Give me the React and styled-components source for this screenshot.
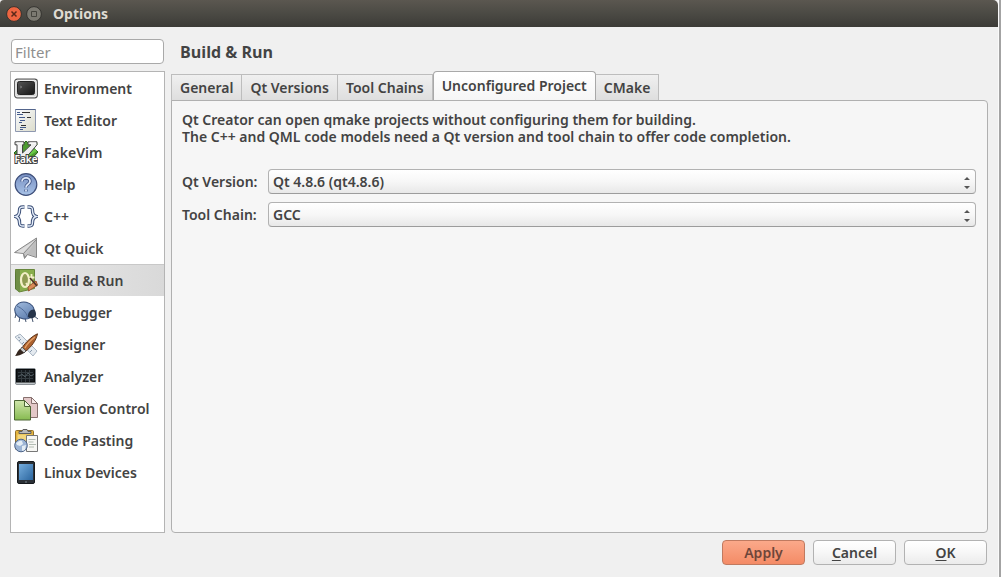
import React, { useState } from 'react';
import styled, { createGlobalStyle } from 'styled-components';

const Global = createGlobalStyle`
  * { box-sizing: border-box; }
  body {
    margin: 0;
    background: #a3a3a3;
    color: #434343;
    font-family: "Noto Sans", "Open Sans", sans-serif;
    font-size: 14px;
    font-weight: 600;
    line-height: 18px;
  }
  button, input, select { font: inherit; color: inherit; }
`;

const Window = styled.div`
  display: flex;
  flex-direction: column;
  min-height: 100vh;
  margin-right: 2px;
  background: #f0f0f0;
  border-right: 1px solid #fafafa;
`;

const TitleBar = styled.header`
  display: flex;
  align-items: center;
  height: 27px;
  padding-left: 6px;
  gap: 4px;
  background: linear-gradient(#5b5750, #4b4a44 50%, #3c3b37);
  border-radius: 4px 5px 0 0;
`;

const WindowButton = styled.button`
  display: grid;
  width: 16px;
  height: 16px;
  padding: 0;
  border: 0;
  background: none;
`;

const Title = styled.h1`
  margin: 0 0 0 7px;
  color: #dfdbd2;
  font-size: 14px;
  line-height: 18px;
  font-weight: 700;
`;

const Body = styled.main`
  flex: 1;
  display: flex;
  gap: 6px;
  padding: 12px 10px 7px;
`;

const Sidebar = styled.nav`
  display: flex;
  flex-direction: column;
  gap: 7px;
  flex: 0 0 155px;
  min-width: 0;
`;

const Filter = styled.input`
  min-width: 0;
  height: 25px;
  margin: 0 1px;
  padding: 0 3px;
  border: 1px solid #a9a9a9;
  border-radius: 4px;
  background: #fff;
  font-size: 15px;
  font-weight: 400;
  &::placeholder { color: #8f8f8f; opacity: 1; }
`;

const CategoryList = styled.ul`
  flex: 1;
  margin: 0;
  padding: 0;
  list-style: none;
  border: 1px solid #b4b4b4;
  background: #fff;
`;

const Category = styled.button`
  display: flex;
  align-items: center;
  gap: 6px;
  width: 100%;
  height: 32px;
  padding: 0 0 0 3px;
  border: 0;
  border-top: 1px solid ${(p) => (p.$active ? '#c8c8c8' : 'transparent')};
  background: ${(p) => (p.$active ? 'linear-gradient(90deg, #e9e9e9, #d9d9d9)' : 'none')};
  text-align: left;
  white-space: nowrap;
`;

const Content = styled.section`
  flex: 1;
  display: flex;
  flex-direction: column;
  min-width: 0;
`;

const Heading = styled.h2`
  margin: 0 0 6px 9px;
  font-family: "Open Sans", sans-serif;
  font-size: 16px;
  line-height: 26px;
  font-weight: 700;
`;

const Tabs = styled.div`
  display: flex;
  align-items: flex-end;
  margin-bottom: -1px;
`;

const Tab = styled.button`
  height: ${(p) => (p.$active ? 30 : 27)}px;
  padding: 0 8px;
  border: 1px solid ${(p) => (p.$active ? '#a8a8a8' : '#bdbdbd')};
  border-bottom-color: ${(p) => (p.$active ? '#f6f6f6' : '#b0b0b0')};
  border-left-width: ${(p) => (p.$joined ? 0 : 1)}px;
  border-radius: ${(p) => (p.$active ? '4px 4px 0 0' : 0)};
  background: ${(p) => (p.$active ? 'linear-gradient(#fff, #f6f6f6)' : 'linear-gradient(#f0f0f0, #dedede)')};
  white-space: nowrap;
`;

const Pane = styled.div`
  flex: 1;
  padding: 10px 11px 10px 10px;
  border: 1px solid #b0b0b0;
  border-radius: 0 4px 4px 4px;
  background: #f6f6f6;
`;

const Note = styled.p`
  margin: 0 0 24px;
  line-height: 17px;
`;

const Fields = styled.div`
  display: grid;
  grid-template-columns: 78px 1fr;
  column-gap: 8px;
  row-gap: 8px;
  align-items: center;
  white-space: nowrap;
`;

const Picker = styled.div`
  position: relative;
  display: grid;
  height: 25px;
  & > svg { position: absolute; right: 5px; top: 7px; pointer-events: none; }
`;

const Select = styled.select`
  appearance: none;
  width: 100%;
  padding: 0 20px 0 4px;
  border: 1px solid #b2b2b2;
  border-bottom-color: #9c9c9c;
  border-radius: 4px;
  background: linear-gradient(#fff, #f7f7f7 50%, #e8e8e8);
`;

const Footer = styled.footer`
  display: flex;
  justify-content: flex-end;
  gap: 8px;
  padding: 0 11px 12px;
`;

const Action = styled.button`
  width: 83px;
  height: 25px;
  padding: 0;
  border: 1px solid ${(p) => (p.$primary ? '#c07a60' : '#b2b2b2')};
  border-radius: 4px;
  background: ${(p) => (p.$primary ? 'linear-gradient(#fba98a, #f48b66)' : 'linear-gradient(#fff, #f7f7f7 50%, #ebebeb)')};
  color: ${(p) => (p.$primary ? '#6e463a' : 'inherit')};
  u { text-underline-offset: 2px; }
`;

const Svg = ({ children }) => (
  <svg width="24" height="24" viewBox="0 0 24 24" aria-hidden="true">{children}</svg>
);

const EnvironmentIcon = () => (
  <Svg>
    <defs><linearGradient id="crt" x2="1" y2="1"><stop stopColor="#555" /><stop offset="1" stopColor="#161616" /></linearGradient></defs>
    <rect x="0.7" y="2.2" width="22.6" height="18.6" rx="2.5" fill="#d4d4d4" stroke="#555" strokeWidth="1.2" />
    <rect x="1.8" y="3.3" width="20.4" height="16.4" rx="1.6" fill="none" stroke="#f4f4f4" />
    <rect x="3.500" y="4.500" width="17" height="13" rx="2" fill="url(#crt)" stroke="#222" />
    <path d="M6 9l2 1-2 1" stroke="#777" fill="none" />
  </Svg>
);

const TextEditorIcon = () => (
  <Svg>
    <defs><linearGradient id="sheet" x2="1" y2="1"><stop stopColor="#f9fbff" /><stop offset="1" stopColor="#dcdccb" /></linearGradient></defs>
    <path d="M1.5.5h20v22h-20z" fill="url(#sheet)" stroke="#8e98b0" />
    <path d="M1.500.5h20" stroke="#53658c" />
    <path d="M3 3.500h3M3 5.500h6M5 8.500h6M6 11.500h5M5 13.500h3M6 18.500h6M6 20.500h3" stroke="#435b8c" />
    <path d="M8 3.500h8M13 8.500h4M7 16.500h5" stroke="#333" />
  </Svg>
);

const FakeVimIcon = () => (
  <Svg>
    <path d="M12 0l12 11-11 12L0 12z" fill="#4d9b30" stroke="#27601d" />
    <path d="M13 9l10-7M14 14l8-5" stroke="#67c946" strokeWidth="3" />
    <path d="M1 .8h9v3H8.500V12L17 3.800h-3v-3h9v3L10 19H3V3.800H1z" fill="#eee" stroke="#444" />
    <path d="M3 2h6M16 2h6M5 4v11" stroke="#fff" />
    <text x="12" y="22" textAnchor="middle" fontSize="10" fontWeight="600" fill="#fff" stroke="#444" strokeWidth="2" paintOrder="stroke">Fake</text>
  </Svg>
);

const HelpIcon = () => (
  <Svg>
    <defs><linearGradient id="orb" x2="0" y2="1"><stop stopColor="#7890c3" /><stop offset="1" stopColor="#a8c2e6" /></linearGradient></defs>
    <circle cx="12" cy="11.500" r="10.800" fill="url(#orb)" stroke="#3e4e79" strokeWidth="1.200" />
    <path d="M8 8.500c0-5 8.500-4.500 8 0-.3 3-4 2.500-4 6M12 16.500v2" fill="none" stroke="#425687" strokeWidth="3.400" />
    <path d="M8 8.500c0-5 8.500-4.500 8 0-.3 3-4 2.500-4 6M12 16.500v2" fill="none" stroke="#dce6f8" strokeWidth="1.800" />
  </Svg>
);

const CppIcon = () => (
  <Svg>
    {[['#3d5078', 3.4], ['#e4edfa', 1.4]].map(([color, width]) => (
      <g key={color} fill="none" stroke={color} strokeWidth={width}>
        <path d="M10.500 2H9C6 2 5.500 3 5.500 5.500S5.300 10.500 1.800 11.500c3.500 1 3.700 3.500 3.700 6S6 21 9 21h1.500" />
        <path d="M13.500 2H15c3 0 3.500 1 3.500 3.500s.2 5 3.700 6c-3.500 1-3.700 3.500-3.700 6S18 21 15 21h-1.500" />
      </g>
    ))}
  </Svg>
);

const QtQuickIcon = () => (
  <Svg>
    <path d="M22.500 1v19.500l-9-3-3 4-1-5-9-1z" fill="#c5c5c5" stroke="#888" />
    <path d="M21.500 3L9.500 16l-7-1z" fill="#dedede" />
    <path d="M22 3L14 17l8 2.500z" fill="#bdbdbd" />
    <path d="M22 3L9.500 16.500l1 4 3-3" fill="none" stroke="#8b8b8b" />
  </Svg>
);

const BuildIcon = () => (
  <Svg>
    <path d="M1 1l4 2v20l-4-3z" fill="#587634" />
    <path d="M1.500.5h19v19L5 23z" fill="#88ad4c" stroke="#67863b" />
    <path d="M2 1h4v20l-1 2-3-3z" fill="#6f8e46" />
    <ellipse cx="11" cy="11" rx="4" ry="7" fill="#8f9b52" stroke="#f3efc7" strokeWidth="2.200" />
    <path d="M12 14l3 4M17.500 5v9c0 2 1 2 2 2M15.500 8.500h5" fill="none" stroke="#f3efc7" strokeWidth="1.800" />
    <path d="M14 18l5-4 3-2 1.500 4-9 6z" fill="#d88b57" stroke="#9c5730" />
    <path d="M16 9l7 8" stroke="#4d3328" strokeWidth="1.600" />
  </Svg>
);

const DebuggerIcon = () => (
  <Svg>
    <defs><linearGradient id="bug" x2="1" y2="1"><stop stopColor="#a4bee0" /><stop offset="1" stopColor="#5676a8" /></linearGradient></defs>
    <path d="M6 16l-1 5M11 17l1 4M18 17l1 4M20 15l4 3M2 13l-1 4" stroke="#43536d" />
    <ellipse cx="10.500" cy="9.500" rx="9.800" ry="8.500" fill="url(#bug)" stroke="#344c78" transform="rotate(12 10.500 9.500)" />
    <path d="M3 5C7 7 12 10 14 17" fill="none" stroke="#4e6a98" />
    <path d="M20.500 8.500c-4-.5-7 3-6.500 7.500 2 2 5.500 1.500 7.500-.5 1-2 .5-5-1-7z" fill="#26344a" />
  </Svg>
);

const DesignerIcon = () => (
  <Svg>
    <path d="M1 4l5-3 17 17-4 5z" fill="#e4eaf0" stroke="#a9b5c2" />
    <path d="M5 8l2-2M8 11l2-2M11 14l2-2M16 19l2-2M4 4l2 1" stroke="#8798ac" />
    <path d="M23.500.8C18 3 11 10 8 15l4 3C17 14 22 8 23.500.8z" fill="#ad612e" stroke="#5d351c" />
    <path d="M21 4c-4 3-8 7-10 11" fill="none" stroke="#e3a26a" strokeWidth="1.400" />
    <path d="M8 14l4 4-2 2-4-3z" fill="#c8c8c8" stroke="#555" />
    <path d="M6 16l4 4c-3 2-6 3-9 3 2-2 2-5 5-7z" fill="#35261e" />
  </Svg>
);

const AnalyzerIcon = () => (
  <Svg>
    <rect x="1.500" y="3.500" width="20" height="16" rx="1.500" fill="#bfc5c8" stroke="#8a9095" />
    <rect x="2.500" y="4.500" width="18" height="12.500" fill="#151a1e" stroke="#080a0b" />
    <path d="M4 7.500h15M4 10.500h15M4 13.500h15M7.500 5v12M11.500 5v12M15.500 5v12" stroke="#343c41" />
    <path d="M4 12l4-3 3 3 3-4 3 3 3-2" fill="none" stroke="#4c585e" />
  </Svg>
);

const VersionIcon = () => (
  <Svg>
    <defs><linearGradient id="rev" x2="0" y2="1"><stop stopColor="#d0e6ac" /><stop offset="1" stopColor="#86ba50" /></linearGradient></defs>
    <path d="M9.500.500h8l6 6v14h-14z" fill="#e3c8c8" stroke="#87706e" />
    <path d="M17.500.500v6h6z" fill="#f7eaea" stroke="#87706e" />
    <path d="M.5 3.500h10l6 6v13.500H.5z" fill="url(#rev)" stroke="#4c6635" />
    <path d="M10.500 3.500v6h6z" fill="#edf8dd" stroke="#4c6635" />
  </Svg>
);

const PastingIcon = () => (
  <Svg>
    <rect x="1.500" y="1.500" width="18" height="19" rx="1" fill="#e5b53e" stroke="#91702b" />
    <path d="M3.500 5.500h14v13h-14z" fill="#f3d67c" />
    <path d="M5 2.500h3l1-2h4l1 2h3v2H5z" fill="#bbb" stroke="#5f5f5f" />
    <path d="M12.500 6.500h11v16h-11z" fill="#f7f7f4" stroke="#777" />
    <path d="M14.500 10.500h7M14.500 13h5M15 15.500h7M15 18h5" stroke="#b3bcb3" />
    <circle cx="7" cy="16.500" r="6.300" fill="#9db5d5" stroke="#4c6286" />
    <path d="M2 14c3-1 3-3 6-2l1 3-3 2-3-1zM8 17l4-1-1 5-3 1z" fill="#e4edf4" />
  </Svg>
);

const DevicesIcon = () => (
  <Svg>
    <defs><linearGradient id="screen" x2="1" y2="1"><stop stopColor="#75addd" /><stop offset="1" stopColor="#2b659e" /></linearGradient></defs>
    <rect x="3.500" y=".5" width="17" height="22" rx="1.500" fill="#2b3036" stroke="#15191d" />
    <path d="M5 3h14v16H5z" fill="url(#screen)" />
    <path d="M11 21h2" stroke="#7b858d" />
  </Svg>
);

const categories = [
  ['Environment', EnvironmentIcon],
  ['Text Editor', TextEditorIcon],
  ['FakeVim', FakeVimIcon],
  ['Help', HelpIcon],
  ['C++', CppIcon],
  ['Qt Quick', QtQuickIcon],
  ['Build & Run', BuildIcon],
  ['Debugger', DebuggerIcon],
  ['Designer', DesignerIcon],
  ['Analyzer', AnalyzerIcon],
  ['Version Control', VersionIcon],
  ['Code Pasting', PastingIcon],
  ['Linux Devices', DevicesIcon],
];

const tabs = ['General', 'Qt Versions', 'Tool Chains', 'Unconfigured Project', 'CMake'];

const Arrows = () => (
  <svg width="8" height="14" viewBox="0 0 8 14" aria-hidden="true">
    <path d="M4 1l3 3H1zM4 13l3-3H1z" fill="#555" />
  </svg>
);

export default function App() {
  const [category, setCategory] = useState('Build & Run');
  const [tab, setTab] = useState('Unconfigured Project');
  const activeIndex = tabs.indexOf(tab);
  return (
    <>
      <Global />
      <Window>
        <TitleBar>
          <WindowButton aria-label="Close">
            <svg width="16" height="16" viewBox="0 0 16 16">
              <circle cx="8" cy="8" r="7.400" fill="#ed6541" stroke="#34332f" />
              <path d="M5.500 5.500l5 5m0-5l-5 5" stroke="#5a2819" strokeWidth="1.500" />
            </svg>
          </WindowButton>
          <WindowButton aria-label="Maximize">
            <svg width="16" height="16" viewBox="0 0 16 16">
              <circle cx="8" cy="8" r="7.400" fill="#7c7a72" stroke="#34332f" />
              <path d="M5.500 5.500h5v5h-5z" fill="none" stroke="#45443e" />
            </svg>
          </WindowButton>
          <Title>Options</Title>
        </TitleBar>
        <Body>
          <Sidebar>
            <Filter type="text" placeholder="Filter" aria-label="Filter" />
            <CategoryList>
              {categories.map(([name, Icon]) => (
                <li key={name}>
                  <Category $active={name === category} onClick={() => setCategory(name)}>
                    <Icon />
                    {name}
                  </Category>
                </li>
              ))}
            </CategoryList>
          </Sidebar>
          <Content>
            <Heading>{category}</Heading>
            <Tabs role="tablist">
              {tabs.map((name, i) => (
                <Tab
                  key={name}
                  role="tab"
                  aria-selected={name === tab}
                  $active={name === tab}
                  $joined={i > 0 && i !== activeIndex}
                  onClick={() => setTab(name)}
                >
                  {name}
                </Tab>
              ))}
            </Tabs>
            <Pane role="tabpanel">
              <Note>
                Qt Creator can open qmake projects without configuring them for building.
                <br />
                The C++ and QML code models need a Qt version and tool chain to offer code completion.
              </Note>
              <Fields>
                <label htmlFor="qt-version">Qt Version:</label>
                <Picker>
                  <Select id="qt-version"><option>Qt 4.8.6 (qt4.8.6)</option></Select>
                  <Arrows />
                </Picker>
                <label htmlFor="tool-chain">Tool Chain:</label>
                <Picker>
                  <Select id="tool-chain"><option>GCC</option></Select>
                  <Arrows />
                </Picker>
              </Fields>
            </Pane>
          </Content>
        </Body>
        <Footer>
          <Action $primary>Apply</Action>
          <Action><span><u>C</u>ancel</span></Action>
          <Action><span><u>O</u>K</span></Action>
        </Footer>
      </Window>
    </>
  );
}
